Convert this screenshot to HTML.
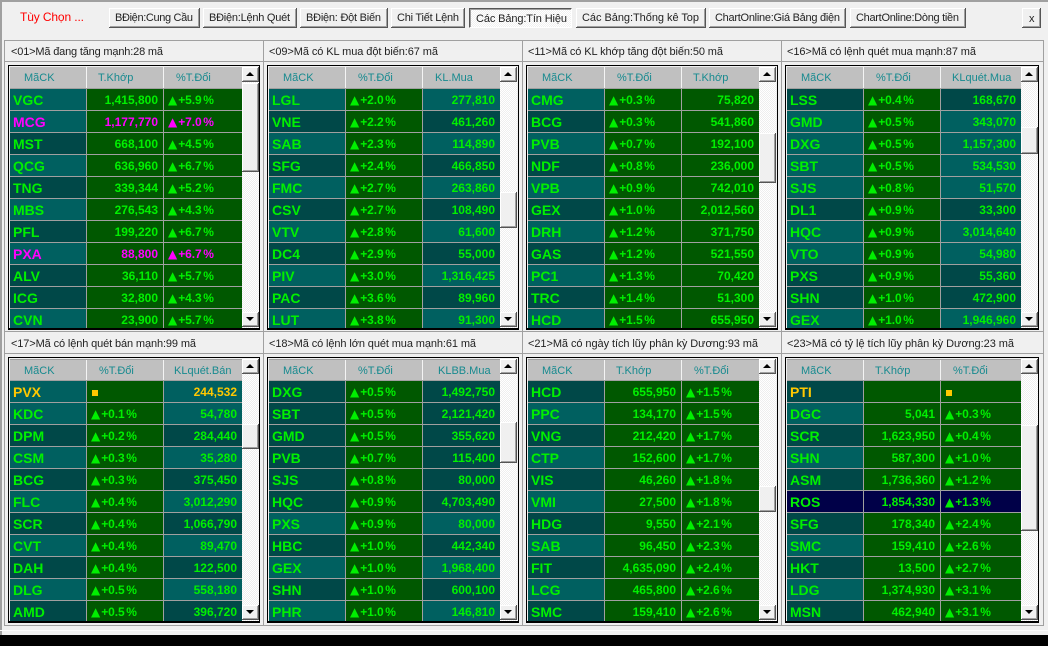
<!DOCTYPE html>
<html><head><meta charset="utf-8"><style>
html,body{margin:0;padding:0;width:1048px;height:646px;overflow:hidden;background:#f0f0f0}
body{position:relative;font-family:"Liberation Sans",Arial,sans-serif;font-size:12px;color:#222}
.a{position:absolute}
.ln{position:absolute;background:#a0a0a0}
.btn{position:absolute;top:8px;height:20px;box-sizing:border-box;background:#f0f0f0;border-right:1px solid #555;border-bottom:1px solid #555;box-shadow:inset 1px 1px 0 #fff,inset -1px -1px 0 #a0a0a0}
.btn.on{border:1px solid #555;border-right-color:#fff;border-bottom-color:#fff;box-shadow:inset 1px 1px 0 #a0a0a0;background:repeating-conic-gradient(#fff 0 25%,#f0f0f0 0 50%) 0 0/2px 2px}
.ov{position:absolute;left:0;top:0;width:1048px;height:646px}
.ov text{font-family:"Liberation Sans",Arial,sans-serif;font-size:11px;fill:#222}
.g{position:absolute;box-sizing:border-box;border:1px solid #000;border-bottom-width:2px;background:#f0f0f0;overflow:hidden}
.tb{position:absolute;left:1px;top:1px;bottom:0;background:#a0a0a0;overflow:hidden}
.h{display:flex;height:21px;margin-bottom:1px;background:#c0c0c0;color:#178a8f;line-height:23px;font-size:11px}
.h span{display:block;width:77px;box-sizing:border-box;padding-left:12px;border-left:1px solid #f4f4f4;white-space:nowrap}
.h span:first-child{width:76px;border-left:0;padding-left:14px}
.h span:last-child{flex:1;width:auto}
.h.s{margin-top:1px;height:20px;line-height:22px}
.r{display:flex;height:21px;margin-bottom:1px;color:#00f000;font-weight:bold;line-height:23px;overflow:hidden}
.L{background:#006060}.D{background:#004848}.N{background:#000048}
.m{color:#ff00ff}.y{color:#ffc800}
.r b{display:block;width:76px;box-sizing:border-box;padding-left:3px;font-size:14px;white-space:nowrap}
.r span{display:block;width:77px;box-sizing:border-box;border-left:1px solid #a0a0a0;background:#005800;white-space:nowrap}
.r span:last-child{flex:1;width:auto}
.n{text-align:right;padding-right:5px}
.p{padding-left:4px;word-spacing:-1.5px;letter-spacing:-.1px}
.p em{font:normal 12px/21px "DejaVu Sans",sans-serif;letter-spacing:0;margin-right:1px}
.t .r span:last-child{background:transparent}
.N span{background:#000048!important}
.sq{display:inline-block;width:6px;height:6px;background:#ffc800;margin-left:1px;vertical-align:0}
.sb{position:absolute;top:1px;bottom:0;width:17px;background:repeating-conic-gradient(#fff 0 25%,#eeeeee 0 50%) 0 0/2px 2px}
.ub,.db,.th{position:absolute;left:0;width:17px;box-sizing:border-box;background:#f0f0f0;border-right:1px solid #555;border-bottom:1px solid #555;box-shadow:inset 1px 1px 0 #fff,inset -1px -1px 0 #a0a0a0}
.ub{top:0;height:15px}.db{bottom:1px;height:15px}
.ub:after,.db:after{content:"";position:absolute;left:4px;width:0;height:0;border-left:4px solid transparent;border-right:4px solid transparent}
.ub:after{top:5px;border-bottom:4px solid #000}
.db:after{top:5px;border-top:4px solid #000}
</style></head><body>
<div class="ln" style="left:0;top:0;width:1048px;height:2px"></div>
<div class="ln" style="left:0;top:0;width:2px;height:635px"></div>
<div class="btn" style="left:109px;width:91px"></div>
<div class="btn" style="left:203px;width:94px"></div>
<div class="btn" style="left:300px;width:88px"></div>
<div class="btn" style="left:391px;width:74px"></div>
<div class="btn on" style="left:469px;width:103px"></div>
<div class="btn" style="left:576px;width:130px"></div>
<div class="btn" style="left:709px;width:137px"></div>
<div class="btn" style="left:850px;width:116px"></div>
<div class="btn" style="left:1022px;width:19px"></div>

<div class="ln" style="left:4px;top:40px;width:1040px;height:1px"></div>
<div class="ln" style="left:4px;top:61px;width:1040px;height:1px"></div>
<div class="ln" style="left:4px;top:331px;width:1040px;height:1px"></div>
<div class="ln" style="left:4px;top:353px;width:1040px;height:1px"></div>
<div class="ln" style="left:4px;top:625px;width:1040px;height:1px"></div>
<div class="ln" style="left:4px;top:40px;width:1px;height:586px"></div>
<div class="ln" style="left:263px;top:40px;width:1px;height:586px"></div>
<div class="ln" style="left:522px;top:40px;width:1px;height:586px"></div>
<div class="ln" style="left:781px;top:40px;width:1px;height:586px"></div>
<div class="ln" style="left:1043px;top:40px;width:1px;height:586px"></div>
<div class="a" style="left:0;top:630px;width:1048px;height:1px;background:#fbfbfb"></div>
<div class="a" style="left:0;top:635px;width:1048px;height:11px;background:#000"></div>

<svg class="ov" viewBox="0 0 1048 646">
<text x="20" y="21" textLength="64" style="font-size:12px;fill:#ff0000">Tùy Chọn ...</text>
<text x="115" y="21" textLength="78">BĐiện:Cung Cầu</text>
<text x="209" y="21" textLength="81">BĐiện:Lệnh Quét</text>
<text x="306" y="21" textLength="75">BĐiện: Đột Biến</text>
<text x="397" y="21" textLength="62">Chi Tiết Lệnh</text>
<text x="476" y="22" textLength="91">Các Bảng:Tín Hiệu</text>
<text x="582" y="21" textLength="117">Các Bảng:Thống kê Top</text>
<text x="715" y="21" textLength="125">ChartOnline:Giá Bảng điện</text>
<text x="856" y="21" textLength="103">ChartOnline:Dòng tiền</text>
<text x="1029" y="22">x</text>
<text x="11" y="55" textLength="152">&lt;01&gt;Mã đang tăng mạnh:28 mã</text>
<text x="269" y="55" textLength="169">&lt;09&gt;Mã có KL mua đột biến:67 mã</text>
<text x="528" y="55" textLength="195">&lt;11&gt;Mã có KL khớp tăng đột biến:50 mã</text>
<text x="787" y="55" textLength="189">&lt;16&gt;Mã có lệnh quét mua mạnh:87 mã</text>
<text x="11" y="347" textLength="185">&lt;17&gt;Mã có lệnh quét bán mạnh:99 mã</text>
<text x="269" y="347" textLength="207">&lt;18&gt;Mã có lệnh lớn quét mua mạnh:61 mã</text>
<text x="528" y="347" textLength="230">&lt;21&gt;Mã có ngày tích lũy phân kỳ Dương:93 mã</text>
<text x="787" y="347" textLength="227">&lt;23&gt;Mã có tỷ lệ tích lũy phân kỳ Dương:23 mã</text>
</svg>

<!-- P1 -->
<div class="g" style="left:8px;top:65px;width:252px;height:265px"><div class="tb" style="width:232px">
<div class="h"><span>MãCK</span><span style="padding-left:11px">T.Khớp</span><span>%T.Đổi</span></div>
<div class="r L"><b>VGC</b><span class="n">1,415,800</span><span class="p"><em>▲</em>+5.9 %</span></div>
<div class="r L m"><b>MCG</b><span class="n">1,177,770</span><span class="p"><em>▲</em>+7.0 %</span></div>
<div class="r D"><b>MST</b><span class="n">668,100</span><span class="p"><em>▲</em>+4.5 %</span></div>
<div class="r L"><b>QCG</b><span class="n">636,960</span><span class="p"><em>▲</em>+6.7 %</span></div>
<div class="r D"><b>TNG</b><span class="n">339,344</span><span class="p"><em>▲</em>+5.2 %</span></div>
<div class="r L"><b>MBS</b><span class="n">276,543</span><span class="p"><em>▲</em>+4.3 %</span></div>
<div class="r D"><b>PFL</b><span class="n">199,220</span><span class="p"><em>▲</em>+6.7 %</span></div>
<div class="r L m"><b>PXA</b><span class="n">88,800</span><span class="p"><em>▲</em>+6.7 %</span></div>
<div class="r D"><b>ALV</b><span class="n">36,110</span><span class="p"><em>▲</em>+5.7 %</span></div>
<div class="r D"><b>ICG</b><span class="n">32,800</span><span class="p"><em>▲</em>+4.3 %</span></div>
<div class="r L"><b>CVN</b><span class="n">23,900</span><span class="p"><em>▲</em>+5.7 %</span></div>
</div><div class="sb" style="left:233px"><div class="ub"></div><div class="th" style="top:16px;height:89px"></div><div class="db"></div></div></div>

<!-- P2 -->
<div class="g t" style="left:267px;top:65px;width:252px;height:265px"><div class="tb" style="width:231px">
<div class="h"><span>MãCK</span><span>%T.Đổi</span><span>KL.Mua</span></div>
<div class="r L"><b>LGL</b><span class="p"><em>▲</em>+2.0 %</span><span class="n">277,810</span></div>
<div class="r D"><b>VNE</b><span class="p"><em>▲</em>+2.2 %</span><span class="n">461,260</span></div>
<div class="r L"><b>SAB</b><span class="p"><em>▲</em>+2.3 %</span><span class="n">114,890</span></div>
<div class="r D"><b>SFG</b><span class="p"><em>▲</em>+2.4 %</span><span class="n">466,850</span></div>
<div class="r L"><b>FMC</b><span class="p"><em>▲</em>+2.7 %</span><span class="n">263,860</span></div>
<div class="r D"><b>CSV</b><span class="p"><em>▲</em>+2.7 %</span><span class="n">108,490</span></div>
<div class="r L"><b>VTV</b><span class="p"><em>▲</em>+2.8 %</span><span class="n">61,600</span></div>
<div class="r D"><b>DC4</b><span class="p"><em>▲</em>+2.9 %</span><span class="n">55,000</span></div>
<div class="r L"><b>PIV</b><span class="p"><em>▲</em>+3.0 %</span><span class="n">1,316,425</span></div>
<div class="r D"><b>PAC</b><span class="p"><em>▲</em>+3.6 %</span><span class="n">89,960</span></div>
<div class="r L"><b>LUT</b><span class="p"><em>▲</em>+3.8 %</span><span class="n">91,300</span></div>
</div><div class="sb" style="left:232px"><div class="ub"></div><div class="th" style="top:125px;height:36px"></div><div class="db"></div></div></div>

<!-- P3 -->
<div class="g" style="left:526px;top:65px;width:252px;height:265px"><div class="tb" style="width:231px">
<div class="h"><span>MãCK</span><span>%T.Đổi</span><span style="padding-left:11px">T.Khớp</span></div>
<div class="r L"><b>CMG</b><span class="p"><em>▲</em>+0.3 %</span><span class="n">75,820</span></div>
<div class="r D"><b>BCG</b><span class="p"><em>▲</em>+0.3 %</span><span class="n">541,860</span></div>
<div class="r L"><b>PVB</b><span class="p"><em>▲</em>+0.7 %</span><span class="n">192,100</span></div>
<div class="r D"><b>NDF</b><span class="p"><em>▲</em>+0.8 %</span><span class="n">236,000</span></div>
<div class="r L"><b>VPB</b><span class="p"><em>▲</em>+0.9 %</span><span class="n">742,010</span></div>
<div class="r D"><b>GEX</b><span class="p"><em>▲</em>+1.0 %</span><span class="n">2,012,560</span></div>
<div class="r L"><b>DRH</b><span class="p"><em>▲</em>+1.2 %</span><span class="n">371,750</span></div>
<div class="r D"><b>GAS</b><span class="p"><em>▲</em>+1.2 %</span><span class="n">521,550</span></div>
<div class="r L"><b>PC1</b><span class="p"><em>▲</em>+1.3 %</span><span class="n">70,420</span></div>
<div class="r D"><b>TRC</b><span class="p"><em>▲</em>+1.4 %</span><span class="n">51,300</span></div>
<div class="r L"><b>HCD</b><span class="p"><em>▲</em>+1.5 %</span><span class="n">655,950</span></div>
</div><div class="sb" style="left:232px"><div class="ub"></div><div class="th" style="top:66px;height:50px"></div><div class="db"></div></div></div>

<!-- P4 -->
<div class="g t" style="left:785px;top:65px;width:254px;height:265px"><div class="tb" style="width:234px">
<div class="h"><span>MãCK</span><span>%T.Đổi</span><span style="padding-left:11px">KLquét.Mua</span></div>
<div class="r D"><b>LSS</b><span class="p"><em>▲</em>+0.4 %</span><span class="n">168,670</span></div>
<div class="r L"><b>GMD</b><span class="p"><em>▲</em>+0.5 %</span><span class="n">343,070</span></div>
<div class="r L"><b>DXG</b><span class="p"><em>▲</em>+0.5 %</span><span class="n">1,157,300</span></div>
<div class="r L"><b>SBT</b><span class="p"><em>▲</em>+0.5 %</span><span class="n">534,530</span></div>
<div class="r L"><b>SJS</b><span class="p"><em>▲</em>+0.8 %</span><span class="n">51,570</span></div>
<div class="r D"><b>DL1</b><span class="p"><em>▲</em>+0.9 %</span><span class="n">33,300</span></div>
<div class="r L"><b>HQC</b><span class="p"><em>▲</em>+0.9 %</span><span class="n">3,014,640</span></div>
<div class="r L"><b>VTO</b><span class="p"><em>▲</em>+0.9 %</span><span class="n">54,980</span></div>
<div class="r D"><b>PXS</b><span class="p"><em>▲</em>+0.9 %</span><span class="n">55,360</span></div>
<div class="r D"><b>SHN</b><span class="p"><em>▲</em>+1.0 %</span><span class="n">472,900</span></div>
<div class="r L"><b>GEX</b><span class="p"><em>▲</em>+1.0 %</span><span class="n">1,946,960</span></div>
</div><div class="sb" style="left:235px"><div class="ub"></div><div class="th" style="top:60px;height:27px"></div><div class="db"></div></div></div>

<!-- P5 -->
<div class="g t" style="left:8px;top:357px;width:252px;height:266px"><div class="tb" style="width:232px">
<div class="h s"><span>MãCK</span><span>%T.Đổi</span><span style="padding-left:10px">KLquét.Bán</span></div>
<div class="r L y"><b>PVX</b><span class="p"><i class="sq"></i></span><span class="n">244,532</span></div>
<div class="r L"><b>KDC</b><span class="p"><em>▲</em>+0.1 %</span><span class="n">54,780</span></div>
<div class="r D"><b>DPM</b><span class="p"><em>▲</em>+0.2 %</span><span class="n">284,440</span></div>
<div class="r L"><b>CSM</b><span class="p"><em>▲</em>+0.3 %</span><span class="n">35,280</span></div>
<div class="r D"><b>BCG</b><span class="p"><em>▲</em>+0.3 %</span><span class="n">375,450</span></div>
<div class="r L"><b>FLC</b><span class="p"><em>▲</em>+0.4 %</span><span class="n">3,012,290</span></div>
<div class="r D"><b>SCR</b><span class="p"><em>▲</em>+0.4 %</span><span class="n">1,066,790</span></div>
<div class="r L"><b>CVT</b><span class="p"><em>▲</em>+0.4 %</span><span class="n">89,470</span></div>
<div class="r D"><b>DAH</b><span class="p"><em>▲</em>+0.4 %</span><span class="n">122,500</span></div>
<div class="r L"><b>DLG</b><span class="p"><em>▲</em>+0.5 %</span><span class="n">558,180</span></div>
<div class="r D"><b>AMD</b><span class="p"><em>▲</em>+0.5 %</span><span class="n">396,720</span></div>
</div><div class="sb" style="left:233px"><div class="ub"></div><div class="th" style="top:65px;height:25px"></div><div class="db"></div></div></div>

<!-- P6 -->
<div class="g t" style="left:267px;top:357px;width:252px;height:266px"><div class="tb" style="width:231px">
<div class="h s"><span>MãCK</span><span>%T.Đổi</span><span style="padding-left:15px">KLBB.Mua</span></div>
<div class="r D"><b>DXG</b><span class="p"><em>▲</em>+0.5 %</span><span class="n">1,492,750</span></div>
<div class="r D"><b>SBT</b><span class="p"><em>▲</em>+0.5 %</span><span class="n">2,121,420</span></div>
<div class="r D"><b>GMD</b><span class="p"><em>▲</em>+0.5 %</span><span class="n">355,620</span></div>
<div class="r D"><b>PVB</b><span class="p"><em>▲</em>+0.7 %</span><span class="n">115,400</span></div>
<div class="r D"><b>SJS</b><span class="p"><em>▲</em>+0.8 %</span><span class="n">80,000</span></div>
<div class="r D"><b>HQC</b><span class="p"><em>▲</em>+0.9 %</span><span class="n">4,703,490</span></div>
<div class="r L"><b>PXS</b><span class="p"><em>▲</em>+0.9 %</span><span class="n">80,000</span></div>
<div class="r D"><b>HBC</b><span class="p"><em>▲</em>+1.0 %</span><span class="n">442,340</span></div>
<div class="r L"><b>GEX</b><span class="p"><em>▲</em>+1.0 %</span><span class="n">1,968,400</span></div>
<div class="r D"><b>SHN</b><span class="p"><em>▲</em>+1.0 %</span><span class="n">600,100</span></div>
<div class="r L"><b>PHR</b><span class="p"><em>▲</em>+1.0 %</span><span class="n">146,810</span></div>
</div><div class="sb" style="left:232px"><div class="ub"></div><div class="th" style="top:63px;height:41px"></div><div class="db"></div></div></div>

<!-- P7 -->
<div class="g" style="left:526px;top:357px;width:252px;height:266px"><div class="tb" style="width:231px">
<div class="h s"><span>MãCK</span><span style="padding-left:11px">T.Khớp</span><span>%T.Đổi</span></div>
<div class="r D"><b>HCD</b><span class="n">655,950</span><span class="p"><em>▲</em>+1.5 %</span></div>
<div class="r L"><b>PPC</b><span class="n">134,170</span><span class="p"><em>▲</em>+1.5 %</span></div>
<div class="r D"><b>VNG</b><span class="n">212,420</span><span class="p"><em>▲</em>+1.7 %</span></div>
<div class="r L"><b>CTP</b><span class="n">152,600</span><span class="p"><em>▲</em>+1.7 %</span></div>
<div class="r D"><b>VIS</b><span class="n">46,260</span><span class="p"><em>▲</em>+1.8 %</span></div>
<div class="r L"><b>VMI</b><span class="n">27,500</span><span class="p"><em>▲</em>+1.8 %</span></div>
<div class="r D"><b>HDG</b><span class="n">9,550</span><span class="p"><em>▲</em>+2.1 %</span></div>
<div class="r L"><b>SAB</b><span class="n">96,450</span><span class="p"><em>▲</em>+2.3 %</span></div>
<div class="r D"><b>FIT</b><span class="n">4,635,090</span><span class="p"><em>▲</em>+2.4 %</span></div>
<div class="r L"><b>LCG</b><span class="n">465,800</span><span class="p"><em>▲</em>+2.6 %</span></div>
<div class="r D"><b>SMC</b><span class="n">159,410</span><span class="p"><em>▲</em>+2.6 %</span></div>
</div><div class="sb" style="left:232px"><div class="ub"></div><div class="th" style="top:127px;height:26px"></div><div class="db"></div></div></div>

<!-- P8 -->
<div class="g" style="left:785px;top:357px;width:254px;height:266px"><div class="tb" style="width:234px">
<div class="h s"><span>MãCK</span><span style="padding-left:11px">T.Khớp</span><span>%T.Đổi</span></div>
<div class="r D y"><b>PTI</b><span class="n"></span><span class="p"><i class="sq"></i></span></div>
<div class="r L"><b>DGC</b><span class="n">5,041</span><span class="p"><em>▲</em>+0.3 %</span></div>
<div class="r D"><b>SCR</b><span class="n">1,623,950</span><span class="p"><em>▲</em>+0.4 %</span></div>
<div class="r L"><b>SHN</b><span class="n">587,300</span><span class="p"><em>▲</em>+1.0 %</span></div>
<div class="r D"><b>ASM</b><span class="n">1,736,360</span><span class="p"><em>▲</em>+1.2 %</span></div>
<div class="r N"><b>ROS</b><span class="n">1,854,330</span><span class="p"><em>▲</em>+1.3 %</span></div>
<div class="r D"><b>SFG</b><span class="n">178,340</span><span class="p"><em>▲</em>+2.4 %</span></div>
<div class="r L"><b>SMC</b><span class="n">159,410</span><span class="p"><em>▲</em>+2.6 %</span></div>
<div class="r D"><b>HKT</b><span class="n">13,500</span><span class="p"><em>▲</em>+2.7 %</span></div>
<div class="r L"><b>LDG</b><span class="n">1,374,930</span><span class="p"><em>▲</em>+3.1 %</span></div>
<div class="r D"><b>MSN</b><span class="n">462,940</span><span class="p"><em>▲</em>+3.1 %</span></div>
</div><div class="sb" style="left:235px"><div class="ub"></div><div class="th" style="top:66px;height:106px"></div><div class="db"></div></div></div>
</body></html>
